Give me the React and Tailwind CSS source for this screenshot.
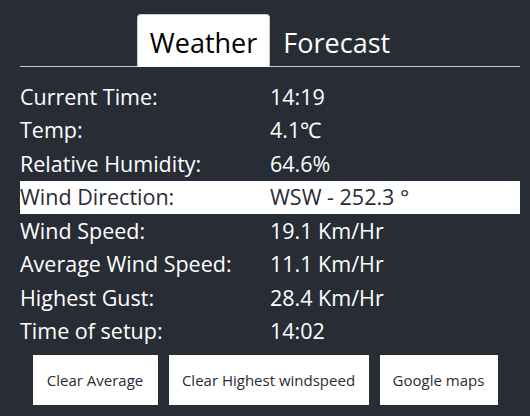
import React, { useState } from 'react';

const rows = [
  { label: 'Current Time:', value: '14:19' },
  { label: 'Temp:', value: '4.1℃' },
  { label: 'Relative Humidity:', value: '64.6%' },
  { label: 'Wind Direction:', value: 'WSW - 252.3 °', highlight: true },
  { label: 'Wind Speed:', value: '19.1 Km/Hr' },
  { label: 'Average Wind Speed:', value: '11.1 Km/Hr' },
  { label: 'Highest Gust:', value: '28.4 Km/Hr' },
  { label: 'Time of setup:', value: '14:02' },
];

const App = () => {
  const [tab, setTab] = useState('weather');

  return (
    <div className="min-h-screen bg-[#282c34] pt-[14px] font-['Open_Sans',sans-serif]">
      {/* tabs */}
      <div className="ml-5 w-[500px] flex justify-center border-b border-[#c8c8c8]">
        <button
          onClick={() => setTab('weather')}
          className={`h-[53px] pt-[3px] px-[12px] -mb-px rounded-t border text-[27px] leading-none ${
            tab === 'weather'
              ? 'bg-white text-black border-[#c8c8c8] border-b-white'
              : 'text-white border-transparent'
          }`}
        >
          Weather
        </button>
        <button
          onClick={() => setTab('forecast')}
          className={`h-[53px] pt-[3px] px-[12px] -mb-px rounded-t border text-[27px] leading-none ${
            tab === 'forecast'
              ? 'bg-white text-black border-[#c8c8c8] border-b-white'
              : 'text-white border-transparent'
          }`}
        >
          Forecast
        </button>
      </div>

      {/* readings */}
      <div className="ml-5 w-[500px] pt-[13px]">
        {rows.map((row) => (
          <div
            key={row.label}
            className={`grid grid-cols-2 h-[33.5px] items-center text-[21.5px] ${
              row.highlight ? 'bg-white text-[#282c34]' : 'text-white'
            }`}
          >
            <span>{row.label}</span>
            <span>{row.value}</span>
          </div>
        ))}
      </div>

      <div className="flex justify-center gap-[11px] mt-[7px]">
        <button className="h-[50px] w-[125px] bg-white text-[#282c34] text-[15px]">Clear Average</button>
        <button className="h-[50px] w-[200px] bg-white text-[#282c34] text-[15px]">Clear Highest windspeed</button>
        <button className="h-[50px] w-[118px] bg-white text-[#282c34] text-[15px]">Google maps</button>
      </div>
    </div>
  );
};

export default App;
